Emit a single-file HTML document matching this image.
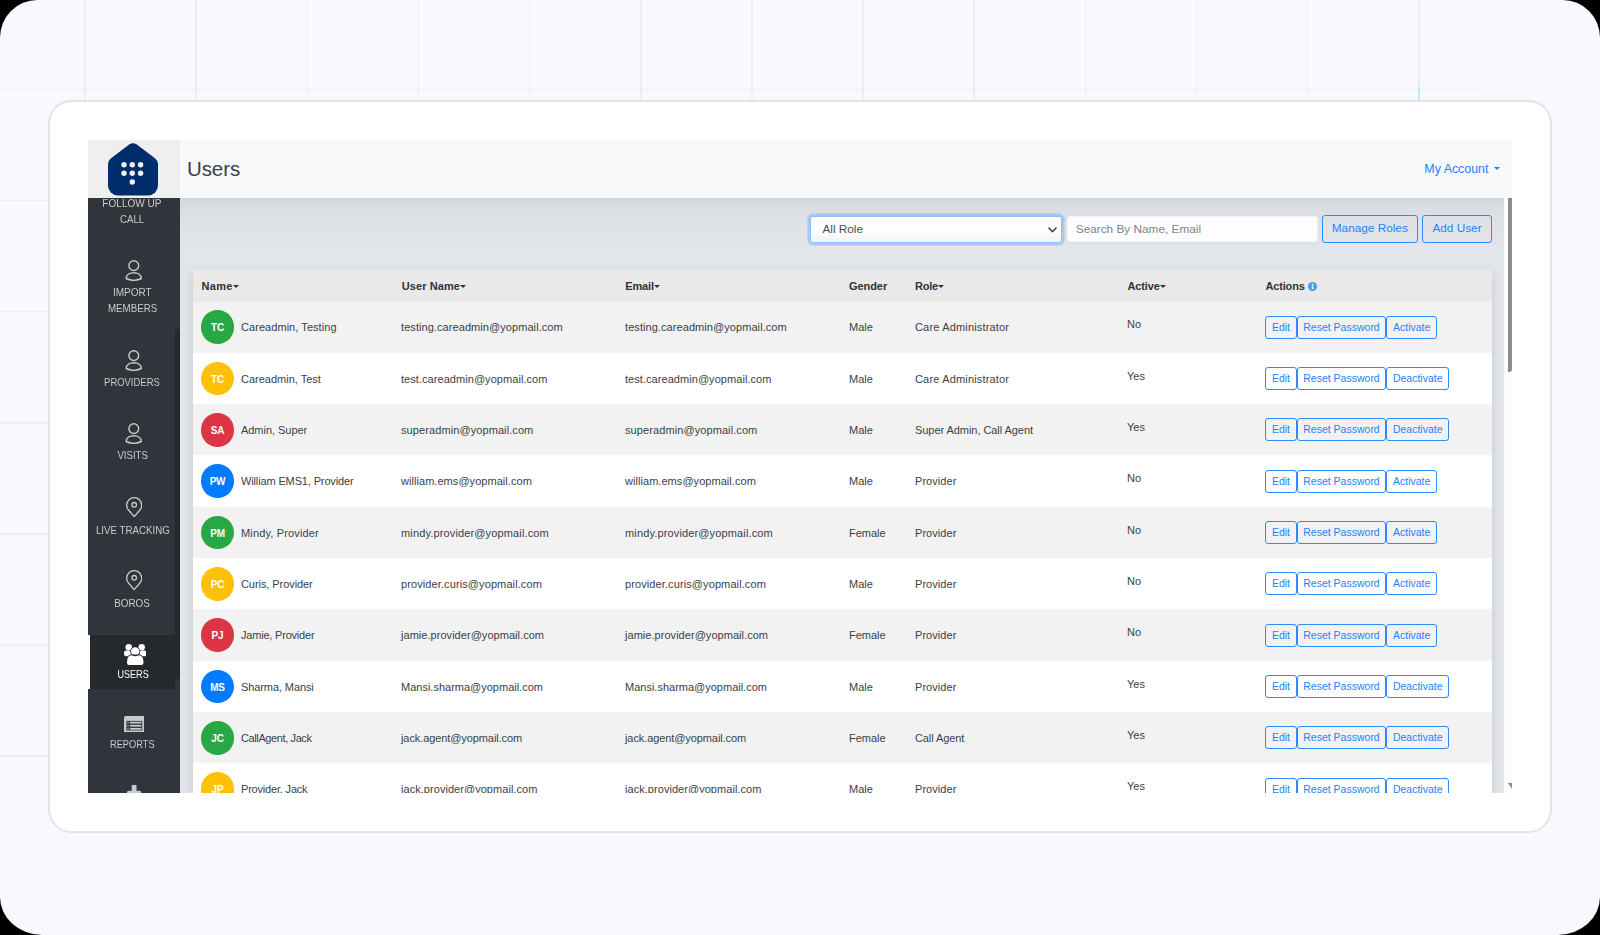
<!DOCTYPE html>
<html lang="en">
<head>
<meta charset="utf-8">
<title>Users</title>
<style>
*{box-sizing:border-box;margin:0;padding:0}
html,body{width:1600px;height:935px;background:#000;overflow:hidden}
body{font-family:"Liberation Sans",sans-serif;color:#3a3f45}
.page{position:absolute;left:0;top:0;width:1600px;height:935px;background:#f8f9fd;border-radius:37.5px 37.5px 42px 42px / 37.5px 37.5px 38px 38px;overflow:hidden}
.vl{position:absolute;top:0;width:1.5px;height:100px;background:#ebedf9}
.hl{position:absolute;left:0;height:1.5px;width:1479.5px;background:#ebedf9}
.card{position:absolute;left:48px;top:100px;width:1504px;height:733px;background:#fff;border:2px solid #dfe4ec;border-radius:23.5px}
.app{position:absolute;left:88px;top:140px;width:1424px;height:653px;overflow:hidden;background:#fff}
.logo{position:absolute;left:0;top:0;width:92px;height:58px;background:#efefef}
.lg{position:absolute;left:20px;top:3px}
.hdr{position:absolute;left:92px;top:0;width:1332px;height:58px;background:#f8f9fb}
.title{position:absolute;left:7px;top:16px;font-size:20.5px;line-height:26px;color:#3b4047;letter-spacing:-.1px}
.acct{position:absolute;right:23.6px;top:21px;font-size:12.4px;line-height:16px;color:#1a84ff}
.acct i{position:absolute;right:-12px;top:5.8px;border:3.2px solid transparent;border-top:3.4px solid #1a84ff;border-bottom:0}
.side{position:absolute;left:0;top:58px;width:92px;height:595px;background:#30343b;overflow:hidden}
.nav{position:absolute;left:0;width:88.8px;text-align:center;color:#c9cacc;font-size:10.5px;line-height:16px;text-transform:uppercase}
.lb{will-change:transform}
.lb span{display:inline-block}
.nav svg{display:block;margin:0 auto 2.5px;position:relative}
.nav.on{background:#25282d;color:#fff;border-left:2px solid #fff;padding-top:8.8px;width:87.4px}
.sthumb{position:absolute;left:87.4px;top:130.6px;width:4.5px;height:350.5px;background:#24272c;border-radius:2.2px}
.main{position:absolute;left:92px;top:58px;width:1324.4px;height:595px;background:#e2e5ea;overflow:hidden}
.main:before{content:"";position:absolute;left:0;top:0;right:0;height:52px;background:linear-gradient(#d3d6da,#dadde1 22%,#dfe2e6 50%,#e2e5ea)}
.sbar{position:absolute;left:1416.4px;top:58px;width:7.6px;height:595px;background:#fcfcfc}
.sbar u{position:absolute;left:3.2px;top:585px;width:0;height:0;border-left:4.4px solid transparent;border-top:6.5px solid #8b8b8b}
.sbar b{position:absolute;left:3.3px;top:0;width:4.3px;height:173.6px;background:#8b8b8b;border-radius:0 0 3px 0}
.ctl{position:absolute;top:17px;height:27px;font-size:11.8px;line-height:25px;border-radius:3px;white-space:nowrap}
.sel{left:630.4px;width:251.6px;top:17.6px;height:27px;line-height:24.6px;background:linear-gradient(#fff 45%,#f3f3f3);border:1px solid #8fc0f7;box-shadow:0 0 0 2.6px rgba(0,123,255,.24);color:#495057;padding-left:11px}
.chev{position:absolute;right:4px;top:10px}
.inp{left:886.8px;width:251.3px;top:17.6px;height:26.9px;line-height:25px;background:#fdfdfd;border:1px solid #f3f4f6;color:#7d838a;padding-left:8px}
.btn{border:1px solid #2a8bff;color:#1a84ff;text-align:center;background:transparent;top:16.9px;height:28px;line-height:25px}
.tbl{position:absolute;left:13px;top:70px;width:1299px;background:#fff;box-shadow:0 3px 9px rgba(0,0,0,.13)}
.th{position:absolute;top:0;left:0;width:1299px;height:33px;background:#e9e9e9;font-weight:bold;font-size:11px;line-height:34px;color:#2f3338}
.th span{position:absolute;top:0;white-space:nowrap}
.th i{display:inline-block;border:3.1px solid transparent;border-top:3.6px solid #2f3338;border-bottom:0;vertical-align:1.9px;margin-left:-.1px}
.info{vertical-align:-1px}
.row{position:absolute;left:0;width:1299px;height:51.33px;font-size:11px;color:#3a3f45}
.row.odd{background:#f2f2f2}
.row span{position:absolute;white-space:nowrap;line-height:16px;top:17px}
.c1{left:48px}.c1h{left:8.6px}.c2{left:208px}.c3{left:432px}.c4{left:656px}.c5{left:722px}.c6{left:934px}.c7{left:1072px}
.row .c6{top:14px}
.av{position:absolute;left:7.7px;top:8.8px;width:33.6px;height:33.6px;border-radius:50%;color:#fff;font-weight:bold;font-size:10px;line-height:33.6px;text-align:center}
.b{position:absolute;top:14.6px;height:22.8px;border:1px solid #2a8bff;border-radius:3px;color:#1a84ff;font-size:10.5px;line-height:21px;text-align:center;white-space:nowrap}
.row .ai{left:7.7px;width:33.6px;text-align:center;color:#fff;font-weight:bold;font-size:10px;letter-spacing:-.2px}
</style>
</head>
<body>
<div class="page">
<div class="vl" style="left:84.25px"></div>
<div class="vl" style="left:195.40px"></div>
<div class="vl" style="left:306.55px"></div>
<div class="vl" style="left:417.70px"></div>
<div class="vl" style="left:528.85px"></div>
<div class="vl" style="left:640.00px"></div>
<div class="vl" style="left:751.15px"></div>
<div class="vl" style="left:862.30px"></div>
<div class="vl" style="left:973.45px"></div>
<div class="vl" style="left:1084.60px"></div>
<div class="vl" style="left:1195.75px"></div>
<div class="vl" style="left:1306.90px"></div>
<div class="vl" style="left:1418.05px"></div>
<div class="hl" style="top:88.75px"></div>
<div class="hl" style="top:199.85px"></div>
<div class="hl" style="top:310.95px"></div>
<div class="hl" style="top:422.05px"></div>
<div class="hl" style="top:533.15px"></div>
<div class="hl" style="top:644.25px"></div>
<div class="hl" style="top:755.35px"></div>
<div class="vl" style="left:1418.4px;top:82px;height:18px;background:linear-gradient(rgba(190,234,248,0),#bfeaf8 40%)"></div>
<div class="card"></div>
<div class="app">
<div class="logo"><svg class="lg" width="50" height="53" viewBox="0 0 50 53"><path d="M21.2 1.6 L3.4 15 Q0 17.6 0 21.8 L0 42.6 A9.8 9.8 0 0 0 9.8 52.4 L40.2 52.4 A9.8 9.8 0 0 0 50 42.6 L50 21.8 Q50 17.6 46.6 15 L28.8 1.6 Q25 -1.2 21.2 1.6 Z" fill="#002d6b"/>
<g fill="#f1f1f1"><circle cx="16" cy="21.8" r="2.7"/><circle cx="24.3" cy="21.8" r="2.7"/><circle cx="32.6" cy="21.8" r="2.7"/><circle cx="16" cy="30.2" r="2.7"/><circle cx="24.3" cy="30.2" r="2.7"/><circle cx="32.6" cy="30.2" r="2.7"/><circle cx="24.3" cy="39" r="2.7"/></g></svg></div>
<div class="hdr"><div class="title">Users</div><div class="acct">My Account<i></i></div></div>
<div class="side">
<div class="nav" style="top:-3.5px"><div class="lb"><span style="transform:scaleX(0.956)">Follow Up</span><br><span style="transform:scaleX(0.92)">Call</span></div></div>
<div class="nav" style="top:62px"><svg width="17.5" height="21" viewBox="0 0 17.5 21" fill="none" stroke="#c9cacc" stroke-width="1.4" style="left:1.75px"><circle cx="8.8" cy="5.6" r="4.9"/><path stroke-linejoin="round" d="M1.15 18.5 C1.5 10.8 16 10.8 16.35 18.5 Q8.75 22.2 1.15 18.5 Z"/></svg><div class="lb"><span style="transform:scaleX(0.953)">Import</span><br><span style="transform:scaleX(0.928)">Members</span></div></div>
<div class="nav" style="top:152px"><svg width="17.5" height="21" viewBox="0 0 17.5 21" fill="none" stroke="#c9cacc" stroke-width="1.4" style="left:1.75px"><circle cx="8.8" cy="5.6" r="4.9"/><path stroke-linejoin="round" d="M1.15 18.5 C1.5 10.8 16 10.8 16.35 18.5 Q8.75 22.2 1.15 18.5 Z"/></svg><div class="lb"><span style="transform:scaleX(0.9)">Providers</span></div></div>
<div class="nav" style="top:225px"><svg width="17.5" height="21" viewBox="0 0 17.5 21" fill="none" stroke="#c9cacc" stroke-width="1.4" style="left:1.75px"><circle cx="8.8" cy="5.6" r="4.9"/><path stroke-linejoin="round" d="M1.15 18.5 C1.5 10.8 16 10.8 16.35 18.5 Q8.75 22.2 1.15 18.5 Z"/></svg><div class="lb"><span style="transform:scaleX(0.916)">Visits</span></div></div>
<div class="nav" style="top:298.7px"><svg width="16.4" height="20.4" viewBox="0 0 16.4 20.4" fill="none" stroke="#c9cacc" stroke-width="1.3" stroke-linejoin="round" style="left:1.8px;margin-bottom:4.7px"><path d="M8.2 19.7 L2.5 13.02 A7.5 7.5 0 1 1 13.9 13.02 Z"/><circle cx="8.2" cy="7.8" r="2.3"/></svg><div class="lb"><span style="transform:scaleX(0.926)">Live Tracking</span></div></div>
<div class="nav" style="top:372.2px"><svg width="16.4" height="20.4" viewBox="0 0 16.4 20.4" fill="none" stroke="#c9cacc" stroke-width="1.3" stroke-linejoin="round" style="left:1.8px;margin-bottom:4.7px"><path d="M8.2 19.7 L2.5 13.02 A7.5 7.5 0 1 1 13.9 13.02 Z"/><circle cx="8.2" cy="7.8" r="2.3"/></svg><div class="lb"><span style="transform:scaleX(0.94)">Boros</span></div></div>
<div class="nav on" style="top:437.3px;height:53.6px"><svg width="22.5" height="21.1" viewBox="0 0 22.5 21.1" fill="#fff" style="left:2.3px;margin-bottom:1.1px"><circle cx="4.7" cy="3.2" r="3.2"/><circle cx="17.7" cy="3.2" r="3.2"/><rect x="0" y="6.4" width="7" height="5.9" rx="2.2"/><rect x="15.5" y="6.4" width="7" height="5.9" rx="2.2"/><circle cx="11.2" cy="7.4" r="4.9" fill="#25282d"/><circle cx="11.2" cy="7.4" r="4.2"/><path d="M2.3 18.6 Q2.3 10.4 7.4 10.4 L15 10.4 Q20.2 10.4 20.2 18.6 Q20.2 21.8 17 21.8 L5.5 21.8 Q2.3 21.8 2.3 18.6Z" fill="#25282d"/><path d="M3 18.4 Q3 11.2 7.6 11.2 Q11.2 13.4 14.8 11.2 Q19.5 11.2 19.5 18.4 Q19.5 21.1 17 21.1 L5.5 21.1 Q3 21.1 3 18.4Z"/></svg><div class="lb"><span style="transform:scaleX(0.865)">Users</span></div></div>
<div class="nav" style="top:517.5px"><svg width="20.8" height="16.6" viewBox="0 0 20.8 16.6" style="left:1.65px;margin-bottom:4.2px"><rect x="0" y="0" width="20.8" height="16.6" rx="1.8" fill="#c9cacc"/><rect x="2.4" y="4.9" width="15.9" height="9.6" fill="#353940"/><g fill="#c9cacc"><rect x="6" y="5.8" width="11.4" height="1.7"/><rect x="6" y="8.9" width="11.4" height="1.7"/><rect x="6" y="12" width="11.4" height="1.7"/><rect x="3.3" y="5.8" width="1.6" height="1.7" opacity=".55"/><rect x="3.3" y="8.9" width="1.6" height="1.7" opacity=".55"/><rect x="3.3" y="12" width="1.6" height="1.7" opacity=".55"/></g></svg><div class="lb"><span style="transform:scaleX(0.883)">Reports</span></div></div>
<div class="nav" style="top:587px"><svg width="16.2" height="16.2" viewBox="0 0 16.2 16.2" fill="#c9cacc" style="left:1.4px"><rect x="5.7" y="0" width="4.8" height="16.2" rx=".8"/><rect x="1" y="5.7" width="14.2" height="4.8" rx="1.6"/></svg><div class="lb"></div></div>
<div class="sthumb"></div>
</div>
<div class="main">
<div class="ctl sel">All Role<svg class="chev" width="9" height="6" viewBox="0 0 9 6" fill="none" stroke="#343a40" stroke-width="1.4" stroke-linecap="round" stroke-linejoin="round"><path d="M0.9 1 L4.5 4.7 L8.1 1"/></svg></div>
<div class="ctl inp">Search By Name, Email</div>
<div class="ctl btn" style="left:1142px;width:95.6px">Manage Roles</div>
<div class="ctl btn" style="left:1242.2px;width:69.6px">Add User</div>
<div class="tbl" style="top:70.5px;height:560px">
<div class="th"><span class="c1h" style="letter-spacing:.3px">Name<i></i></span><span class="c2" style="left:208.7px;letter-spacing:.1px">User Name<i></i></span><span class="c3" style="left:432.2px;letter-spacing:-.12px">Email<i></i></span><span class="c4" style="letter-spacing:-.07px">Gender</span><span class="c5" style="letter-spacing:-.25px">Role<i></i></span><span class="c6" style="left:934.5px;letter-spacing:-.14px">Active<i></i></span><span class="c7" style="left:1072.5px;letter-spacing:-.17px">Actions <svg class="info" width="9" height="9" viewBox="0 0 9 9"><circle cx="4.5" cy="4.5" r="4.5" fill="#4a9ce6"/><rect x="3.8" y="3.7" width="1.5" height="3.3" fill="#fff"/><rect x="3.8" y="1.7" width="1.5" height="1.4" fill="#fff"/></svg></span></div>
<div class="row odd" style="top:33.00px"><div class="av" style="background:#28a745"></div><span class="ai" style="top:18.50px">TC</span><span class="c1" style="top:17.50px;letter-spacing:0.055px">Careadmin, Testing</span><span class="c2" style="top:17.50px;letter-spacing:0.07px">testing.careadmin@yopmail.com</span><span class="c3" style="top:17.50px;letter-spacing:0.07px">testing.careadmin@yopmail.com</span><span class="c4" style="top:17.50px">Male</span><span class="c5" style="top:17.50px;letter-spacing:0.17px">Care Administrator</span><span class="c6" style="top:14.50px">No</span><div class="b" style="left:1072.2px;width:31.6px;top:14.3px">Edit</div><div class="b" style="left:1103.8px;width:89.4px;top:14.3px">Reset Password</div><div class="b" style="left:1193.2px;width:51.0px;top:14.3px">Activate</div></div>
<div class="row" style="top:84.33px"><div class="av" style="background:#ffc107"></div><span class="ai" style="top:19.17px">TC</span><span class="c1" style="top:18.17px">Careadmin, Test</span><span class="c2" style="top:18.17px;letter-spacing:0.054px">test.careadmin@yopmail.com</span><span class="c3" style="top:18.17px;letter-spacing:0.054px">test.careadmin@yopmail.com</span><span class="c4" style="top:18.17px">Male</span><span class="c5" style="top:18.17px;letter-spacing:0.17px">Care Administrator</span><span class="c6" style="top:15.17px">Yes</span><div class="b" style="left:1072.2px;width:31.6px;top:14.3px">Edit</div><div class="b" style="left:1103.8px;width:89.4px;top:14.3px">Reset Password</div><div class="b" style="left:1193.2px;width:63.0px;top:14.3px">Deactivate</div></div>
<div class="row odd" style="top:135.66px"><div class="av" style="background:#dc3545"></div><span class="ai" style="top:18.84px">SA</span><span class="c1" style="top:17.84px;letter-spacing:-0.04px">Admin, Super</span><span class="c2" style="top:17.84px;letter-spacing:0.09px">superadmin@yopmail.com</span><span class="c3" style="top:17.84px;letter-spacing:0.09px">superadmin@yopmail.com</span><span class="c4" style="top:17.84px">Male</span><span class="c5" style="top:17.84px;letter-spacing:-0.055px">Super Admin, Call Agent</span><span class="c6" style="top:14.84px">Yes</span><div class="b" style="left:1072.2px;width:31.6px;top:14.3px">Edit</div><div class="b" style="left:1103.8px;width:89.4px;top:14.3px">Reset Password</div><div class="b" style="left:1193.2px;width:63.0px;top:14.3px">Deactivate</div></div>
<div class="row" style="top:186.99px"><div class="av" style="background:#007bff"></div><span class="ai" style="top:18.51px">PW</span><span class="c1" style="top:17.51px;letter-spacing:-0.136px">William EMS1, Provider</span><span class="c2" style="top:17.51px;letter-spacing:0.05px">william.ems@yopmail.com</span><span class="c3" style="top:17.51px;letter-spacing:0.05px">william.ems@yopmail.com</span><span class="c4" style="top:17.51px">Male</span><span class="c5" style="top:17.51px;letter-spacing:0.06px">Provider</span><span class="c6" style="top:14.51px">No</span><div class="b" style="left:1072.2px;width:31.6px;top:14.3px">Edit</div><div class="b" style="left:1103.8px;width:89.4px;top:14.3px">Reset Password</div><div class="b" style="left:1193.2px;width:51.0px;top:14.3px">Activate</div></div>
<div class="row odd" style="top:238.32px"><div class="av" style="background:#28a745"></div><span class="ai" style="top:19.18px">PM</span><span class="c1" style="top:18.18px;letter-spacing:0.15px">Mindy, Provider</span><span class="c2" style="top:18.18px;letter-spacing:0.14px">mindy.provider@yopmail.com</span><span class="c3" style="top:18.18px;letter-spacing:0.14px">mindy.provider@yopmail.com</span><span class="c4" style="top:18.18px">Female</span><span class="c5" style="top:18.18px;letter-spacing:0.06px">Provider</span><span class="c6" style="top:15.18px">No</span><div class="b" style="left:1072.2px;width:31.6px;top:14.3px">Edit</div><div class="b" style="left:1103.8px;width:89.4px;top:14.3px">Reset Password</div><div class="b" style="left:1193.2px;width:51.0px;top:14.3px">Activate</div></div>
<div class="row" style="top:289.65px"><div class="av" style="background:#ffc107"></div><span class="ai" style="top:18.85px">PC</span><span class="c1" style="top:17.85px;letter-spacing:-0.07px">Curis, Provider</span><span class="c2" style="top:17.85px;letter-spacing:0.1px">provider.curis@yopmail.com</span><span class="c3" style="top:17.85px;letter-spacing:0.1px">provider.curis@yopmail.com</span><span class="c4" style="top:17.85px">Male</span><span class="c5" style="top:17.85px;letter-spacing:0.06px">Provider</span><span class="c6" style="top:14.85px">No</span><div class="b" style="left:1072.2px;width:31.6px;top:14.3px">Edit</div><div class="b" style="left:1103.8px;width:89.4px;top:14.3px">Reset Password</div><div class="b" style="left:1193.2px;width:51.0px;top:14.3px">Activate</div></div>
<div class="row odd" style="top:340.98px"><div class="av" style="background:#dc3545"></div><span class="ai" style="top:18.52px">PJ</span><span class="c1" style="top:17.52px;letter-spacing:-0.2px">Jamie, Provider</span><span class="c2" style="top:17.52px;letter-spacing:0.04px">jamie.provider@yopmail.com</span><span class="c3" style="top:17.52px;letter-spacing:0.04px">jamie.provider@yopmail.com</span><span class="c4" style="top:17.52px">Female</span><span class="c5" style="top:17.52px;letter-spacing:0.06px">Provider</span><span class="c6" style="top:14.52px">No</span><div class="b" style="left:1072.2px;width:31.6px;top:14.3px">Edit</div><div class="b" style="left:1103.8px;width:89.4px;top:14.3px">Reset Password</div><div class="b" style="left:1193.2px;width:51.0px;top:14.3px">Activate</div></div>
<div class="row" style="top:392.31px"><div class="av" style="background:#007bff"></div><span class="ai" style="top:19.19px">MS</span><span class="c1" style="top:18.19px;letter-spacing:-0.1px">Sharma, Mansi</span><span class="c2" style="top:18.19px">Mansi.sharma@yopmail.com</span><span class="c3" style="top:18.19px">Mansi.sharma@yopmail.com</span><span class="c4" style="top:18.19px">Male</span><span class="c5" style="top:18.19px;letter-spacing:0.06px">Provider</span><span class="c6" style="top:15.19px">Yes</span><div class="b" style="left:1072.2px;width:31.6px;top:14.3px">Edit</div><div class="b" style="left:1103.8px;width:89.4px;top:14.3px">Reset Password</div><div class="b" style="left:1193.2px;width:63.0px;top:14.3px">Deactivate</div></div>
<div class="row odd" style="top:443.64px"><div class="av" style="background:#28a745"></div><span class="ai" style="top:18.86px">JC</span><span class="c1" style="top:17.86px;letter-spacing:-0.39px">CallAgent, Jack</span><span class="c2" style="top:17.86px;letter-spacing:-0.09px">jack.agent@yopmail.com</span><span class="c3" style="top:17.86px;letter-spacing:-0.09px">jack.agent@yopmail.com</span><span class="c4" style="top:17.86px">Female</span><span class="c5" style="top:17.86px;letter-spacing:-0.1px">Call Agent</span><span class="c6" style="top:14.86px">Yes</span><div class="b" style="left:1072.2px;width:31.6px;top:14.3px">Edit</div><div class="b" style="left:1103.8px;width:89.4px;top:14.3px">Reset Password</div><div class="b" style="left:1193.2px;width:63.0px;top:14.3px">Deactivate</div></div>
<div class="row" style="top:494.97px"><div class="av" style="background:#ffc107"></div><span class="ai" style="top:18.53px">JP</span><span class="c1" style="top:17.53px;letter-spacing:-0.19px">Provider, Jack</span><span class="c2" style="top:17.53px;letter-spacing:0.045px">jack.provider@yopmail.com</span><span class="c3" style="top:17.53px;letter-spacing:0.045px">jack.provider@yopmail.com</span><span class="c4" style="top:17.53px">Male</span><span class="c5" style="top:17.53px;letter-spacing:0.06px">Provider</span><span class="c6" style="top:14.53px">Yes</span><div class="b" style="left:1072.2px;width:31.6px;top:14.3px">Edit</div><div class="b" style="left:1103.8px;width:89.4px;top:14.3px">Reset Password</div><div class="b" style="left:1193.2px;width:63.0px;top:14.3px">Deactivate</div></div>
</div>
</div>
<div class="sbar"><b></b><u></u></div>
</div>
</div>
</body>
</html>
